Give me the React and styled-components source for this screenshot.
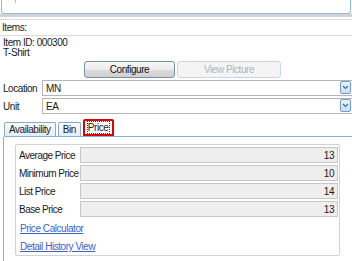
import styled, { createGlobalStyle } from "styled-components";

const Global = createGlobalStyle`
  html, body { margin: 0; padding: 0; background: #fff; }
  body {
    font-family: "Liberation Sans", Arial, sans-serif;
    font-size: 10px;
    letter-spacing: -0.45px;
    color: #1a1a1a;
    white-space: nowrap;
  }
`;

const Page = styled.div`
  width: 352px;
  height: 261px;
  overflow: hidden;
  display: flex;
  flex-direction: column;
`;

const TopPanel = styled.div`
  height: 13px;
  flex-shrink: 0;
  margin: 0 1px;
  border: 1px solid #8ebbe0;
  border-top: none;
  border-radius: 0 0 3px 3px;
  position: relative;
`;

const Caret = styled.span`
  position: absolute;
  left: 13px;
  top: 0;
  width: 1px;
  height: 3px;
  background: #bbb;
`;

const Splitter = styled.div`
  height: 3px;
  flex-shrink: 0;
  background: #d2d2d2;
  margin-bottom: 2px;
`;

const SectionHead = styled.div`
  height: 15px;
  flex-shrink: 0;
  border-top: 1px solid #dcdcdc;
  border-bottom: 1px solid #dcdcdc;
  display: flex;
  align-items: center;
  padding-left: 2px;
`;

const Info = styled.div`
  padding: 2px 0 0 3px;
  line-height: 10px;
`;

const ButtonRow = styled.div`
  display: flex;
  gap: 2px;
  margin: 3px 0 2px 84px;
`;

const Button = styled.div`
  width: ${({ w }) => w}px;
  height: 17px;
  box-sizing: border-box;
  border: 1px solid ${({ disabled }) => (disabled ? "#c5d6e6" : "#7a8fa5")};
  border-radius: 3px;
  display: flex;
  align-items: center;
  justify-content: center;
  color: ${({ disabled }) => (disabled ? "#a9b6c4" : "#111")};
  background: ${({ disabled }) =>
    disabled
      ? "#f4f4f4"
      : "linear-gradient(#f6f6f6 0%, #ececec 50%, #dcdcdc 51%, #cfcfcf 100%)"};
`;

const FieldRow = styled.div`
  display: flex;
  align-items: center;
  height: 16px;
  flex-shrink: 0;
  margin-bottom: 2px;
`;

const FieldLabel = styled.div`
  width: 39px;
  padding-left: 3px;
`;

const Combo = styled.div`
  flex: 1;
  height: 16px;
  box-sizing: border-box;
  border: 1px solid #b5b5b5;
  border-right: none;
  display: flex;
  align-items: center;
  padding-left: 3px;
  position: relative;
`;

const DropBtn = styled.div`
  position: absolute;
  right: 1px;
  top: 0px;
  width: 11px;
  height: 13px;
  box-sizing: border-box;
  border: 1px solid #6f9ccc;
  border-radius: 2px;
  background: linear-gradient(#eaf3fb, #c9def2);
  display: flex;
  align-items: center;
  justify-content: center;
`;

const Tabs = styled.div`
  display: flex;
  align-items: flex-end;
  gap: 2px;
  margin: 3px 0 0 4px;
  height: 17px;
  flex-shrink: 0;
`;

const Tab = styled.div`
  height: ${({ active }) => (active ? 17 : 14)}px;
  box-sizing: border-box;
  padding: 0 ${({ active }) => (active ? 2 : 4)}px;
  border: ${({ active }) => (active ? "2px solid #e00000" : "1px solid #8aa9c8")};
  border-bottom: ${({ active }) => (active ? "2px solid #e00000" : "none")};
  border-radius: 2px 2px 0 0;
  background: ${({ active }) =>
    active ? "#fff" : "linear-gradient(#fbfcfe, #e4ecf5)"};
  display: flex;
  align-items: center;
`;

const Focus = styled.span`
  border: 1px dotted #444;
  line-height: 11px;
  padding: 0 1px 0 0;
`;

const TabPanel = styled.div`
  flex: 1 0 auto;
  margin: 0 -4px -6px 3px;
  border: 1px solid #7fb1e0;
  border-radius: 2px 2px 0 0;
  padding: 7px 15px 0 11px;
`;

const Group = styled.div`
  border: 1px solid #d2d2d2;
  border-radius: 2px;
  padding: 2px 1px 0 3px;
  height: 112px;
  box-sizing: border-box;
`;

const PriceRow = styled.div`
  display: flex;
  align-items: center;
  height: 16px;
  margin-bottom: 2px;
`;

const PriceLabel = styled.div`
  width: 61px;
  letter-spacing: -0.5px;
`;

const PriceBox = styled.div`
  flex: 1;
  height: 16px;
  box-sizing: border-box;
  border: 1px solid #c6c6c6;
  background: #eeeeee;
  display: flex;
  align-items: center;
  justify-content: flex-end;
  padding-right: 3px;
`;

const Link = styled.a`
  display: block;
  color: #3a5fcd;
  text-decoration: underline;
  line-height: 10px;
  margin: ${({ first }) => (first ? "7px" : "8px")} 0 0 1px;
`;

const Chevron = () => (
  <svg width="7" height="5" viewBox="0 0 7 5">
    <path d="M1 1 L3.5 3.5 L6 1" fill="none" stroke="#3b6fb0" strokeWidth="1.2" />
  </svg>
);

const prices = [
  ["Average Price", "13"],
  ["Minimum Price", "10"],
  ["List Price", "14"],
  ["Base Price", "13"],
];

export default function App() {
  return (
    <Page>
      <Global />
      <TopPanel>
        <Caret />
      </TopPanel>
      <Splitter />
      <SectionHead>Items:</SectionHead>
      <Info>
        <div>Item ID: 000300</div>
        <div>T-Shirt</div>
      </Info>
      <ButtonRow>
        <Button w={91}>Configure</Button>
        <Button w={104} disabled>
          View Picture
        </Button>
      </ButtonRow>
      <FieldRow>
        <FieldLabel>Location</FieldLabel>
        <Combo>
          MN
          <DropBtn>
            <Chevron />
          </DropBtn>
        </Combo>
      </FieldRow>
      <FieldRow>
        <FieldLabel>Unit</FieldLabel>
        <Combo>
          EA
          <DropBtn>
            <Chevron />
          </DropBtn>
        </Combo>
      </FieldRow>
      <Tabs>
        <Tab>Availability</Tab>
        <Tab>Bin</Tab>
        <Tab active>
          <Focus>Price</Focus>
        </Tab>
      </Tabs>
      <TabPanel>
        <Group>
          {prices.map(([label, value]) => (
            <PriceRow key={label}>
              <PriceLabel>{label}</PriceLabel>
              <PriceBox>{value}</PriceBox>
            </PriceRow>
          ))}
          <Link first>Price Calculator </Link>
          <Link>Detail History View</Link>
        </Group>
      </TabPanel>
    </Page>
  );
}
